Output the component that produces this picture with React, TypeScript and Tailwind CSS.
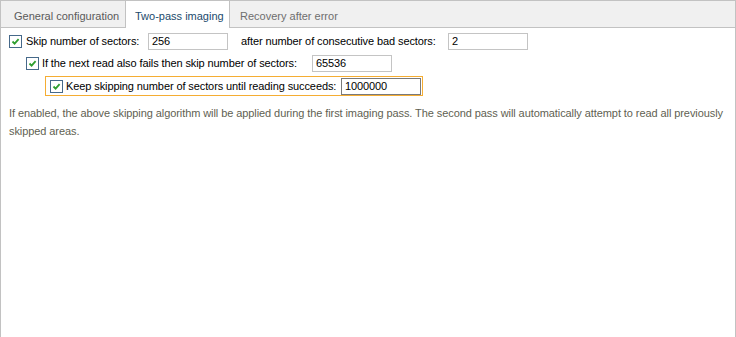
import React from "react";

function Check() {
  return (
    <div className="w-[13px] h-[13px] shrink-0 border border-[#46698a] bg-white flex items-center justify-center">
      <svg width="9" height="9" viewBox="0 0 9 9">
        <path d="M1.5 4.5 L3.6 6.6 L7.6 2.2" fill="none" stroke="#2e9e2e" strokeWidth="1.8" />
      </svg>
    </div>
  );
}

function Field({ value, focused }: { value: string; focused?: boolean }) {
  return (
    <div
      className={
        "w-[80px] h-[17px] shrink-0 bg-white px-[3px] flex items-center leading-none text-black " +
        (focused ? "border border-[#7a7a7a]" : "border border-[#c4c4c4]")
      }
    >
      {value}
    </div>
  );
}

export default function App() {
  return (
    <div className="w-[736px] h-[337px] bg-white font-['Liberation_Sans',Arial,sans-serif] text-[11px] text-black flex flex-col">
      <div className="flex h-[28px] shrink-0 whitespace-nowrap">
        <div className="w-[126px] bg-[#f0f0f0] border-l border-t border-b border-r border-[#c2c2c2] text-[#5a5a5a] pl-[13px] pt-[8px] leading-[14px]">
          General configuration
        </div>
        <div className="w-[104px] bg-white border-r border-t border-[#c2c2c2] text-[#1c4a6c] pl-[9px] pt-[8px] leading-[14px]">
          Two-pass imaging
        </div>
        <div className="w-[126px] bg-[#f0f0f0] border-t border-b border-[#c2c2c2] text-[#6e6e6e] pl-[10px] pt-[8px] leading-[14px]">
          Recovery after error
        </div>
        <div className="flex-1 bg-[#f0f0f0] border-t border-b border-r border-[#c2c2c2]" />
      </div>
      <div className="flex-1 border-l border-r border-[#c2c2c2] flex flex-col pt-[5px] whitespace-nowrap tracking-[-0.1px]">
        <div className="flex items-center h-[17px] pl-[8px]">
          <div className="w-[139px] flex items-center gap-[4px]">
            <Check />
            <span>Skip number of sectors:</span>
          </div>
          <Field value="256" />
          <span className="w-[220px] pl-[13px]">after number of consecutive bad sectors:</span>
          <Field value="2" />
        </div>
        <div className="flex items-center h-[17px] pl-[25px] mt-[5px]">
          <div className="w-[286px] flex items-center gap-[3px]">
            <Check />
            <span>If the next read also fails then skip number of sectors:</span>
          </div>
          <Field value="65536" />
        </div>
        <div className="ml-[44px] mt-[4px] w-[378px] h-[20px] border border-[#f5ad33] flex items-center pl-[4px]">
          <div className="w-[291px] flex items-center gap-[3px]">
            <Check />
            <span>Keep skipping number of sectors until reading succeeds:</span>
          </div>
          <Field value="1000000" focused />
        </div>
        <p className="mt-[8px] pl-[8px] pr-[4px] leading-[18px] text-[#5f5f52] tracking-[-0.08px] whitespace-normal">
          If enabled, the above skipping algorithm will be applied during the first imaging pass. The second pass will automatically attempt to read all previously skipped areas.
        </p>
      </div>
    </div>
  );
}
